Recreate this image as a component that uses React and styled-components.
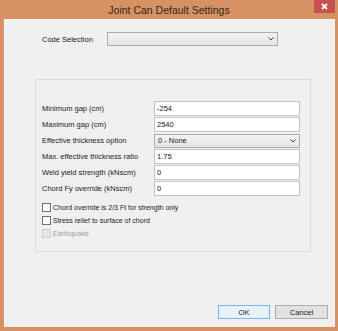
import React from "react";
import styled, { createGlobalStyle } from "styled-components";

const Global = createGlobalStyle`
  html, body { margin: 0; padding: 0; background: #d69263; }
  body { font-family: "Liberation Sans", Arial, sans-serif; }
  * { box-sizing: border-box; }
`;

const Window = styled.div`
  width: 338px;
  height: 331px;
  background: #d69263;
  display: flex;
  flex-direction: column;
`;

const TitleBar = styled.div`
  height: 19px;
  position: relative;
  display: flex;
  align-items: center;
  justify-content: center;
`;

const Title = styled.div`
  font-size: 10.5px;
  color: #33261d;
  padding-top: 1px;
`;

const CloseButton = styled.div`
  position: absolute;
  right: 3px;
  top: 0;
  width: 21px;
  height: 13px;
  background: #c75050;
  display: flex;
  align-items: center;
  justify-content: center;
`;

const Body = styled.div`
  flex: 1;
  margin: 0 3px 4px 4px;
  background: #f0f0f0;
  border-left: 1px solid #f8f8f8;
  border-top: 1px solid #f8f8f8;
  display: flex;
  flex-direction: column;
  font-size: 7.5px;
  color: #222;
`;

const CodeRow = styled.div`
  display: flex;
  align-items: center;
  margin: 12px 0 0 37px;
  height: 14px;
`;

const CodeLabel = styled.div`
  width: 65px;
`;

const Select = styled.div`
  width: ${(p) => p.$w}px;
  height: ${(p) => p.$h}px;
  border: 1px solid #acacac;
  background: linear-gradient(#f2f2f2, #e5e5e5);
  display: flex;
  align-items: center;
  justify-content: space-between;
  padding: 0 3px 0 3px;
`;

const Group = styled.div`
  margin: 33px 0 0 30px;
  width: 276px;
  height: 173px;
  border: 1px solid #dcdcdc;
  padding: 21px 9px 0 6px;
`;

const Form = styled.div`
  display: grid;
  grid-template-columns: 112px 146px;
  grid-auto-rows: 15px;
  row-gap: 1px;
  align-items: center;
`;

const Label = styled.div`
  white-space: nowrap;
`;

const Input = styled.div`
  height: 15px;
  border: 1px solid #c4c4c4;
  background: #fff;
  display: flex;
  align-items: center;
  padding-left: 2px;
`;

const Checks = styled.div`
  margin-top: 7px;
  display: flex;
  flex-direction: column;
  gap: 4px;
`;

const CheckRow = styled.div`
  display: flex;
  align-items: center;
  height: 9px;
  gap: 2px;
  font-size: 7px;
  color: ${(p) => (p.$disabled ? "#a0a0a0" : "#222")};
`;

const Box = styled.div`
  width: 9px;
  height: 9px;
  border: 1px solid ${(p) => (p.$disabled ? "#cfcfcf" : "#707070")};
  background: ${(p) => (p.$disabled ? "#e6e6e6" : "#fff")};
`;

const Buttons = styled.div`
  margin-top: auto;
  margin-bottom: 8px;
  display: flex;
  justify-content: flex-end;
  gap: 5px;
  padding-right: 7px;
`;

const Button = styled.div`
  width: ${(p) => p.$w}px;
  height: 14px;
  border: 1px solid ${(p) => (p.$primary ? "#7eb4ea" : "#adadad")};
  background: ${(p) => (p.$primary ? "#e5f1fb" : "#e1e1e1")};
  display: flex;
  align-items: center;
  justify-content: center;
  font-size: 7.5px;
`;

const Chevron = () => (
  <svg width="6" height="4" viewBox="0 0 6 4">
    <path d="M0.5 0.5 L3 3 L5.5 0.5" fill="none" stroke="#444" strokeWidth="1" />
  </svg>
);

const rows = [
  ["Minimum gap (cm)", "-254"],
  ["Maximum gap (cm)", "2540"],
  ["Effective thickness option", "0 - None", true],
  ["Max. effective thickness ratio", "1.75"],
  ["Weld yield strength (kNscm)", "0"],
  ["Chord Fy override (kNscm)", "0"],
];

export default function App() {
  return (
    <>
      <Global />
      <Window>
        <TitleBar>
          <Title>Joint Can Default Settings</Title>
          <CloseButton>
            <svg width="7" height="7" viewBox="0 0 7 7">
              <path d="M1 1 L6 6 M6 1 L1 6" stroke="#fff" strokeWidth="1.8" />
            </svg>
          </CloseButton>
        </TitleBar>
        <Body>
          <CodeRow>
            <CodeLabel>Code Selection</CodeLabel>
            <Select $w={171} $h={14}>
              <span />
              <Chevron />
            </Select>
          </CodeRow>
          <Group>
            <Form>
              {rows.map(([l, v, sel]) => (
                <React.Fragment key={l}>
                  <Label>{l}</Label>
                  {sel ? (
                    <Select $w={146} $h={14}>
                      <span>{v}</span>
                      <Chevron />
                    </Select>
                  ) : (
                    <Input>{v}</Input>
                  )}
                </React.Fragment>
              ))}
            </Form>
            <Checks>
              <CheckRow>
                <Box />
                Chord override is 2/3 Ft for strength only
              </CheckRow>
              <CheckRow>
                <Box />
                Stress relief to surface of chord
              </CheckRow>
              <CheckRow $disabled>
                <Box $disabled />
                Earthquake
              </CheckRow>
            </Checks>
          </Group>
          <Buttons>
            <Button $w={52} $primary>OK</Button>
            <Button $w={53}>Cancel</Button>
          </Buttons>
        </Body>
      </Window>
    </>
  );
}
